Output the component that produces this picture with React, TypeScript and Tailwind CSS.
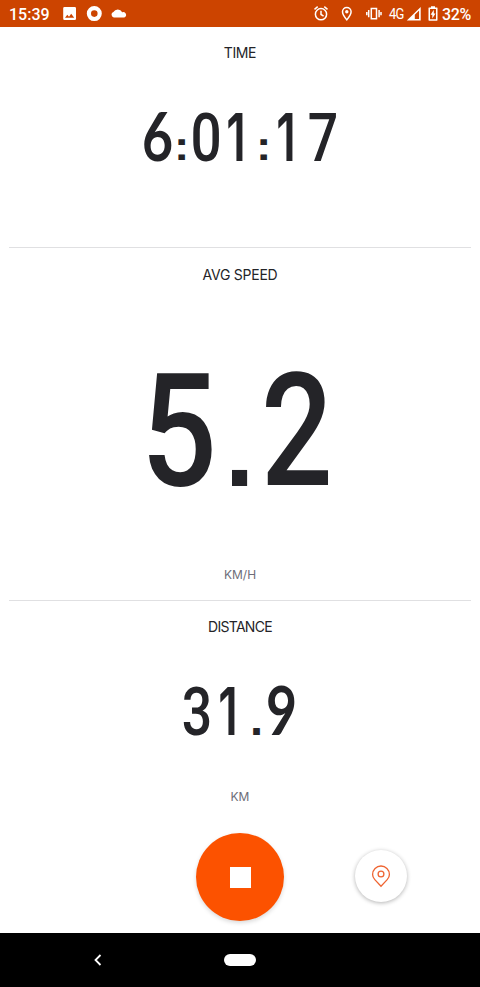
import type { ReactNode } from 'react';

const SANS = 'font-[Inter,Roboto,sans-serif]';

function Glyph({ box, shape, children }: { box: string; shape: string; children: ReactNode }) {
  return (
    <span className={`flex h-full shrink-0 items-center justify-center ${box}`}>
      <span className={`block shrink-0 ${shape}`}>{children}</span>
    </span>
  );
}

const R = "font-['Roboto',sans-serif] font-medium";
const I = "font-['Inter',sans-serif] font-semibold";
const O = "font-['Lato',sans-serif] font-bold";
const L = "font-['Liberation_Sans',sans-serif] font-bold";

function Label({ tracking, children }: { tracking: string; children: ReactNode }) {
  return <h2 className={`h-5 text-center text-[14px] leading-5 text-[#242428] ${tracking}`}>{children}</h2>;
}

function Unit({ children }: { children: ReactNode }) {
  return <p className="h-4 text-center text-[12px] leading-4 text-[#6d6d78]">{children}</p>;
}

function StatusBar() {
  return (
    <header className="flex h-[27px] items-center bg-[#cc4400] font-['Roboto',sans-serif] text-white">
      <span className="ml-[9px] w-[54px] text-[16px] leading-[27px] font-medium pt-[2px]">15:39</span>
      <svg className="h-[27px] w-[70px]" viewBox="63 0 70 27" fill="currentColor">
        <path fillRule="evenodd" d="M64.5 7h10.2q1.3 0 1.3 1.3v10.4q0 1.3-1.3 1.3H64.5q-1.3 0-1.3-1.3V8.300q0-1.300 1.300-1.300zM65 17.800h9.200l-3-4.100-2.200 3-1.700-2z" />
        <circle cx="94.300" cy="13.600" r="5.400" fill="none" stroke="currentColor" strokeWidth="4.200" />
        <path d="M113.800 17.400a2.800 2.800 0 0 1-.4-5.400 5 5 0 0 1 8.800.2 2.700 2.700 0 0 1 2.100 5.200z" />
      </svg>
      <svg className="ml-auto h-[27px] w-[72px]" viewBox="312 0 72 27" fill="none" stroke="currentColor" strokeWidth="1.500">
        <circle cx="321" cy="14.200" r="5.600" />
        <path d="M314.500 9.300l3.200-2.600m9.800 2.600-3.200-2.600M321 10.800v3.700l2.600 1.600" />
        <path d="M346.800 19.900c-2.600-3.300-4.300-5.600-4.300-8.200a4.300 4.300 0 0 1 8.600 0c0 2.600-1.700 4.900-4.300 8.200z" />
        <circle cx="346.800" cy="11.700" r="1.700" fill="currentColor" stroke="none" />
        <path d="M371.300 8.500h5.200v10.200h-5.200zM368.700 10v7.200m10.400-7.200v7.200M366.800 11.900v3.400m14.200-3.400v3.400" />
      </svg>
      <span className="ml-[5px] w-[17px] pt-px text-[13px] leading-[26px] tracking-[-0.7px]">
        <span className="inline-block origin-left translate-y-px scale-y-110">4G</span>
      </span>
      <svg className="h-[27px] w-[33px]" viewBox="406 0 33 27" fill="currentColor">
        <path fillRule="evenodd" d="M406.800 20.500 420.700 7v13.500zM414.800 18.900h4.300v-8.300l-4.300 4.200z" />
        <path fillRule="evenodd" d="M431 6.200h4v1.400h2q.5 0 .5.500v12q0 .6-.6.600h-7.800q-.6 0-.6-.6v-12q0-.5.5-.5h2zM430 9v10.300h6V9z" />
        <path d="M433.800 9.800v3.700h1.700l-3.200 5v-3.700h-1.700z" />
      </svg>
      <span className="ml-[3px] mr-[9px] w-[29px] whitespace-nowrap pt-[2px] text-[16px] leading-[27px] font-medium tracking-[-0.3px]">32%</span>
    </header>
  );
}

export default function App() {
  return (
    <div className={`flex h-[987px] w-[480px] flex-col overflow-hidden bg-white ${SANS}`}>
      <StatusBar />
      <main className="flex h-[906px] flex-col">
        <section className="mx-[9px] h-[221px] border-b border-[#e0e0e2] pt-[16px]">
          <Label tracking="tracking-[-0.4px]">TIME</Label>
          <div className="mt-[45px] ml-[134px] flex h-[60px] text-[67px] leading-[60px] text-[#242428]">
            <Glyph box="w-[28px]" shape={`${O} -translate-y-[3px] scale-x-80`}>6</Glyph>
            <Glyph box="ml-[7px] w-[7px]" shape={`${L} text-[40px] translate-y-[8px] scale-x-115`}>:</Glyph>
            <Glyph box="ml-[7px] w-[28px]" shape={`${R} scale-x-82`}>0</Glyph>
            <Glyph box="ml-[9px] w-[14px]" shape={`${I} text-[66px] -translate-y-px scale-x-70`}>1</Glyph>
            <Glyph box="ml-[17px] w-[7px]" shape={`${L} text-[40px] translate-y-[8px] scale-x-115`}>:</Glyph>
            <Glyph box="ml-[12px] w-[14px]" shape={`${I} text-[66px] -translate-y-px scale-x-70`}>1</Glyph>
            <Glyph box="ml-[17px] w-[27px]" shape={`${R} scale-x-80`}>7</Glyph>
          </div>
        </section>
        <section className="mx-[9px] h-[353px] border-b border-[#e0e0e2] pt-[17px]">
          <Label tracking="tracking-[-0.25px]">AVG SPEED</Label>
          <div className="mt-[76px] ml-[140px] flex h-[140px] text-[158px] leading-[140px] text-[#242428]">
            <Glyph box="w-[63px]" shape={`${R} -translate-x-[2px] scale-x-85`}>5</Glyph>
            <Glyph box="ml-[20px] w-[15px]" shape={`${L} text-[107px] translate-y-[18px]`}>.</Glyph>
            <Glyph box="ml-[18px] w-[63px]" shape={`${R} scale-x-80`}>2</Glyph>
          </div>
          <div className="mt-[66px]"><Unit>KM/H</Unit></div>
        </section>
        <section className="h-[206px] pt-[16px]">
          <Label tracking="tracking-[-0.7px]">DISTANCE</Label>
          <div className="mt-[45px] ml-[183px] flex h-[60px] text-[67px] leading-[60px] text-[#242428]">
            <Glyph box="w-[28px]" shape={`${R} scale-x-80`}>3</Glyph>
            <Glyph box="ml-[10px] w-[14px]" shape={`${I} text-[66px] -translate-y-px scale-x-70`}>1</Glyph>
            <Glyph box="ml-[18px] w-[7px]" shape={`${L} text-[47px] translate-y-[7px]`}>.</Glyph>
            <Glyph box="ml-[7px] w-[28px]" shape={`${O} -translate-y-[3px] scale-x-80`}>9</Glyph>
          </div>
          <div className="mt-[47px]"><Unit>KM</Unit></div>
        </section>
        <div className="flex flex-1 pt-[27px]">
          <button className="mt-[-1px] ml-[196px] flex size-[88px] items-center justify-center rounded-full bg-[#fc5200] shadow-[0_2px_4px_rgba(0,0,0,0.15)]">
            <span className="size-[21px] bg-white" />
          </button>
          <button className="mt-[16px] ml-[71px] flex size-[52px] items-center justify-center rounded-full bg-white shadow-[0_1px_4px_rgba(0,0,0,0.3)]">
            <svg className="h-[24px] w-[20px]" viewBox="0 0 20 24" fill="none" stroke="#ef6431" strokeWidth="1.300">
              <path d="M10 22.300 3.800 15.600C2.300 14 1.600 12.500 1.600 10.400a8.400 8.400 0 0 1 16.800 0c0 2.100-.7 3.600-2.200 5.200z" />
              <circle cx="10" cy="10" r="2.900" />
            </svg>
          </button>
        </div>
      </main>
      <nav className="flex h-[54px] items-center bg-black">
        <svg className="ml-[93px] h-[12px] w-[9px]" viewBox="0 0 9 12" fill="none" stroke="white" strokeWidth="1.800">
          <path d="M7.500 1 2.500 6l5 5" />
        </svg>
        <span className="ml-[122px] h-[12px] w-[32px] rounded-full bg-white" />
      </nav>
    </div>
  );
}
